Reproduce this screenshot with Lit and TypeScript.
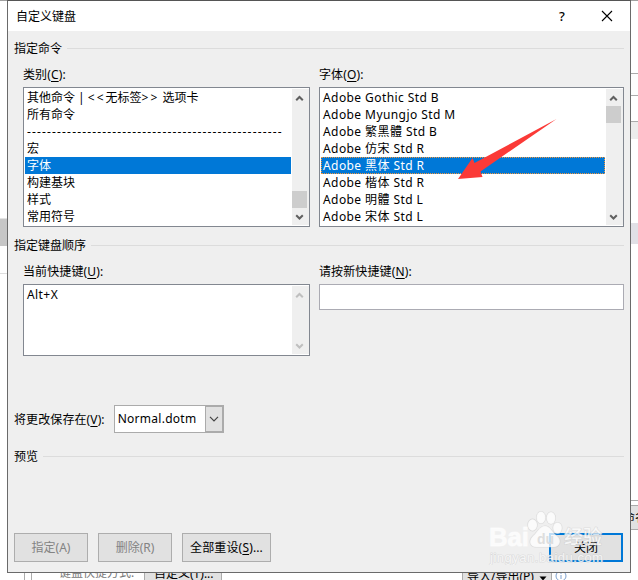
import { LitElement, html, css, svg, nothing } from "lit";
import { customElement, property } from "lit/decorators.js";

const sharedText = css`
  * { box-sizing: border-box; }
  u { text-decoration: underline; text-decoration-thickness: 1px; text-underline-offset: 2px; }
`;

@customElement("scroll-bar")
class ScrollBar extends LitElement {
  @property({ type: String }) thumb = "";
  static styles = css`
    :host { display: flex; flex-direction: column; width: 17px; background: #efefef; color: #606060; }
    :host([disabled]) { color: #bfbfbf; }
    svg { display: block; width: 15px; height: 17px; flex: none; }
    .gap { flex: 1; }
    .thumb { width: 15px; height: 17px; background: #cdcdcd; }
  `;
  arrow(up: boolean) {
    return html`<svg viewBox="0 0 15 17" fill="none" stroke="currentColor" stroke-width="2">
      ${up ? svg`<path d="M4.2 11.3 7.5 8l3.3 3.3"/>` : svg`<path d="M4.2 7.2 7.5 10.500l3.3-3.3"/>`}
    </svg>`;
  }
  render() {
    return html`${this.arrow(true)}
      ${this.thumb === "top" ? html`<div class="thumb"></div>` : nothing}
      <div class="gap"></div>
      ${this.thumb === "bottom" ? html`<div class="thumb"></div>` : nothing}
      ${this.arrow(false)}`;
  }
}

@customElement("list-box")
class ListBox extends LitElement {
  @property({ attribute: false }) items: unknown[] = [];
  @property({ type: Number }) selected = -1;
  @property({ type: Boolean }) focusRing = false;
  @property({ type: Boolean }) inactive = false;
  @property({ type: String }) thumb = "";
  static styles = [sharedText, css`
    :host { display: flex; border: 1px solid #828790; background: #fff; padding: 1px 0 1px 1px; }
    .rows { flex: 1; min-width: 0; padding-right: 1px; }
    .row { height: 17px; line-height: 17px; padding-left: 2px; white-space: pre; overflow: hidden; }
    .row.latin { letter-spacing: .42px; }
    .row.dashes { letter-spacing: 1.15px; }
    .row.on { background: #0078d7; color: #fff; }
    .row.ring { outline: 1px dotted #f0953c; outline-offset: -1px; }
    .angle { letter-spacing: 2px; }
  `];
  render() {
    return html`<div class="rows">${this.items.map((t, i) => {
      const s = typeof t === "string" ? t : "";
      const c = ["row", /^[A-Z]/.test(s) ? "latin" : "", s.startsWith("--") ? "dashes" : "",
        i === this.selected ? "on" : "", i === this.selected && this.focusRing ? "ring" : ""].join(" ");
      return html`<div class=${c}>${t}</div>`;
    })}</div><scroll-bar thumb=${this.thumb} ?disabled=${this.inactive}></scroll-bar>`;
  }
}

@customElement("push-button")
class PushButton extends LitElement {
  static styles = [sharedText, css`
    :host { display: flex; align-items: center; justify-content: center; box-sizing: border-box; height: 29px; width: 74px; border: 1px solid #adadad; background: #e1e1e1; white-space: pre; }
    :host([disabled]) { color: #838383; }
    :host([wide]) { width: 89px; letter-spacing: .15px; }
    :host([primary]) { border: 2px solid #0078d7; }
  `];
  render() { return html`<slot></slot>`; }
}

@customElement("group-title")
class GroupTitle extends LitElement {
  static styles = css`
    :host { display: flex; align-items: center; gap: 5px; height: 17px; line-height: 17px; }
    .rule { flex: 1; height: 1px; background: #dcdcdc; }
  `;
  render() { return html`<slot></slot><div class="rule"></div>`; }
}

@customElement("app-root")
class AppRoot extends LitElement {
  static styles = [sharedText, css`
    :host { display: block; position: relative; width: 638px; height: 580px; overflow: hidden; background: #fff; color: #000;
      font: 12px/17px "Noto Sans", "Noto Sans CJK SC", sans-serif; }
    .behind { position: absolute; }
    .b-top { left: 0; top: 0; width: 638px; height: 1px; background: #a0a0a0; }
    .b-left { left: 0; top: 218px; width: 8px; height: 28px; background: #c6c6c6; border-top: 1px solid #e3e3e3; }
    .b-left2 { left: 0; top: 273px; width: 8px; height: 1px; background: #dedede; }
    .b-r1 { left: 630px; top: 73px; width: 8px; height: 23px; background: #fdfdfd; border: solid #ababab; border-width: 1px 0; }
    .b-r2 { left: 630px; top: 121px; width: 8px; height: 18px; background: #ececec; border-top: 1px solid #ababab; }
    .b-r3 { left: 630px; top: 223px; width: 8px; height: 21px; background: #e1e0e6; }
    .b-r4 { left: 630px; top: 500px; width: 8px; height: 1px; background: #ababab; }
    .b-r5 { left: 622px; top: 505px; width: 38px; height: 25px; line-height: 24px; background: #e1e1e1; border: 1px solid #ababab; white-space: pre; }
    .foot { left: 24px; top: 565px; width: 614px; height: 16px; display: flex; border-left: 1px solid #ababab; line-height: 16px; white-space: pre; }
    .foot .in { width: 7px; border-right: 1px solid #ababab; }
    .foot .lbl { width: 112px; padding-left: 27px; color: #777; }
    .foot .btn { background: #e1e1e1; border: 1px solid #ababab; height: 20px; }
    .foot .b1 { width: 78px; padding-left: 9px; }
    .foot .b2 { width: 90px; margin-left: 240px; padding-left: 4px; display: flex; line-height: 22px; }
    .foot svg { display: block; flex: none; }
    .dialog { position: relative; width: 624px; height: 573px; margin-left: 7px; border: 1px solid #6a6a6a; border-top-color: #555; background: #efefef; display: flex; flex-direction: column; }
    .bar { height: 30px; background: #fff; display: flex; align-items: center; padding: 0 17px 0 8px; }
    .bar .name { flex: 1; }
    .bar .q { width: 12px; margin-right: 33px; font: 500 13px/17px "Noto Sans", sans-serif; text-align: center; }
    .bar svg { display: block; }
    .body { flex: 1; padding: 9px 6px 10px; display: flex; flex-direction: column; }
    .pair { display: grid; grid-template-columns: 287px 305px; gap: 9px; margin-left: 9px; }
    .lab { height: 17px; margin-bottom: 4px; letter-spacing: .12px; }
    .lists { margin-top: 9px; }
    .lists list-box { height: 140px; }
    .keys { margin-top: 9px; }
    .keys list-box { height: 72px; }
    .field { height: 26px; border: 1px solid #ababb3; background: #fff; }
    .g2 { margin-top: 10px; }
    .save { display: flex; align-items: center; gap: 9px; margin-top: 49px; height: 28px; letter-spacing: .1px; }
    .combo { display: flex; width: 110px; height: 28px; border: 1px solid #ababab; background: #fff; }
    .combo .val { flex: 1; padding-left: 3px; line-height: 26px; letter-spacing: .27px; }
    .combo .drop { width: 18px; border: 1px solid #ababab; background: #e1e1e1; display: flex; align-items: center; justify-content: center; }
    .g3 { margin-top: 15px; }
    .actions { display: flex; gap: 10px; margin-top: auto; }
    .actions push-button[primary] { margin-left: auto; margin-right: 1px; }
    .arrow { position: absolute; left: 455px; top: 115px; }
    .mark { position: absolute; left: 485px; top: 505px; }
    .halo { paint-order: stroke; stroke: #c8c8c8; stroke-opacity: .5; stroke-width: 1.2px; stroke-linejoin: round; }
    .bold { stroke: #fff; stroke-opacity: .55; stroke-width: 1px; }
  `];

  private categories = [
    html`其他命令 | <span class="angle">&lt;&lt;</span>无标签<span class="angle">&gt;&gt;</span> 选项卡`,
    "所有命令", "-".repeat(51), "宏", "字体", "构建基块", "样式", "常用符号"];
  private fonts = ["Adobe Gothic Std B", "Adobe Myungjo Std M", "Adobe 繁黑體 Std B", "Adobe 仿宋 Std R", "Adobe 黑体 Std R", "Adobe 楷体 Std R", "Adobe 明體 Std L", "Adobe 宋体 Std L"];

  render() {
    return html`
      <div class="behind b-top"></div><div class="behind b-left"></div><div class="behind b-left2"></div>
      <div class="behind b-r1"></div><div class="behind b-r2"></div><div class="behind b-r3"></div>
      <div class="behind b-r4"></div><div class="behind b-r5">命名</div>
      <div class="behind foot">
        <div class="in"></div><div class="lbl">键盘快捷方式:</div><div class="btn b1">自定义(<u>T</u>)...</div>
        <div class="btn b2">导入/导出(<u>P</u>)<svg width="14" height="18"><path d="M5.500 10.500h7l-3.500 4z"/></svg></div>
        <svg width="20" height="20" fill="none" stroke="#7c9fcd"><circle cx="9" cy="11" r="5"/><path d="M9 10v4M9 7.700v1.200"/></svg>
      </div>
      <div class="dialog">
        <div class="bar"><div class="name">自定义键盘</div><div class="q">?</div>
          <svg width="12" height="12" stroke="#000" stroke-width="1.1"><path d="M1 1l10 10M11 1 1 11"/></svg></div>
        <div class="body">
          <group-title>指定命令</group-title>
          <div class="pair lists">
            <div><div class="lab">类别(<u>C</u>):</div><list-box .items=${this.categories} .selected=${4} thumb="bottom"></list-box></div>
            <div><div class="lab">字体(<u>O</u>):</div><list-box .items=${this.fonts} .selected=${4} .focusRing=${true} thumb="top"></list-box></div>
          </div>
          <group-title class="g2">指定键盘顺序</group-title>
          <div class="pair keys">
            <div><div class="lab">当前快捷键(<u>U</u>):</div><list-box .items=${["Alt+X"]} .inactive=${true}></list-box></div>
            <div><div class="lab">请按新快捷键(<u>N</u>):</div><div class="field"></div></div>
          </div>
          <div class="save"><div>将更改保存在(<u>V</u>):</div>
            <div class="combo"><div class="val">Normal.dotm</div><div class="drop">
              <svg width="10" height="6" fill="none" stroke="#444" stroke-width="1.2"><path d="M1 .8l4 4 4-4"/></svg></div></div></div>
          <group-title class="g3">预览</group-title>
          <div class="actions"><push-button disabled>指定(A)</push-button><push-button disabled>删除(R)</push-button>
            <push-button wide><span>全部重设(<u>S</u>)...</span></push-button><push-button primary>关闭</push-button></div>
        </div>
      </div>
      <svg class="arrow" width="105" height="70" viewBox="455 115 105 70"><path fill="#fb3a37" d="M556.500 119 480.500 171.500 482.500 177 458 179 472.500 158 474.500 163z"/></svg>
      <svg class="mark" width="125" height="60" viewBox="485 505 125 60" fill="#fff" fill-opacity=".75">
        <g class="halo">
          <ellipse cx="532.500" cy="525" rx="4.600" ry="5.800"/><ellipse cx="541" cy="517.500" rx="4.400" ry="6"/><ellipse cx="551" cy="518" rx="4.400" ry="6"/><ellipse cx="557.500" cy="528" rx="4.400" ry="5.500"/>
          <path d="M545 526c-6 0-8 7-12 10-5 5-3 11 3 11h18c6 0 8-7 3-11-5-3-6-10-12-10z"/>
          <text x="564" y="544" font-size="19" textLength="38" font-weight="500" font-family="Noto Sans CJK SC, sans-serif">经验</text>
          <text x="490" y="562" font-size="13" textLength="113" font-family="Liberation Sans, sans-serif">jingyan.baidu.com</text>
          <text class="bold" x="489" y="546" font-size="25" font-weight="700" textLength="40" lengthAdjust="spacingAndGlyphs" font-family="Liberation Sans, sans-serif">Bai</text>
        </g>
        <text x="537" y="544" font-size="14" font-weight="700" fill="#dedede" fill-opacity="1" font-family="Liberation Sans, sans-serif">du</text>
      </svg>`;
  }
}
